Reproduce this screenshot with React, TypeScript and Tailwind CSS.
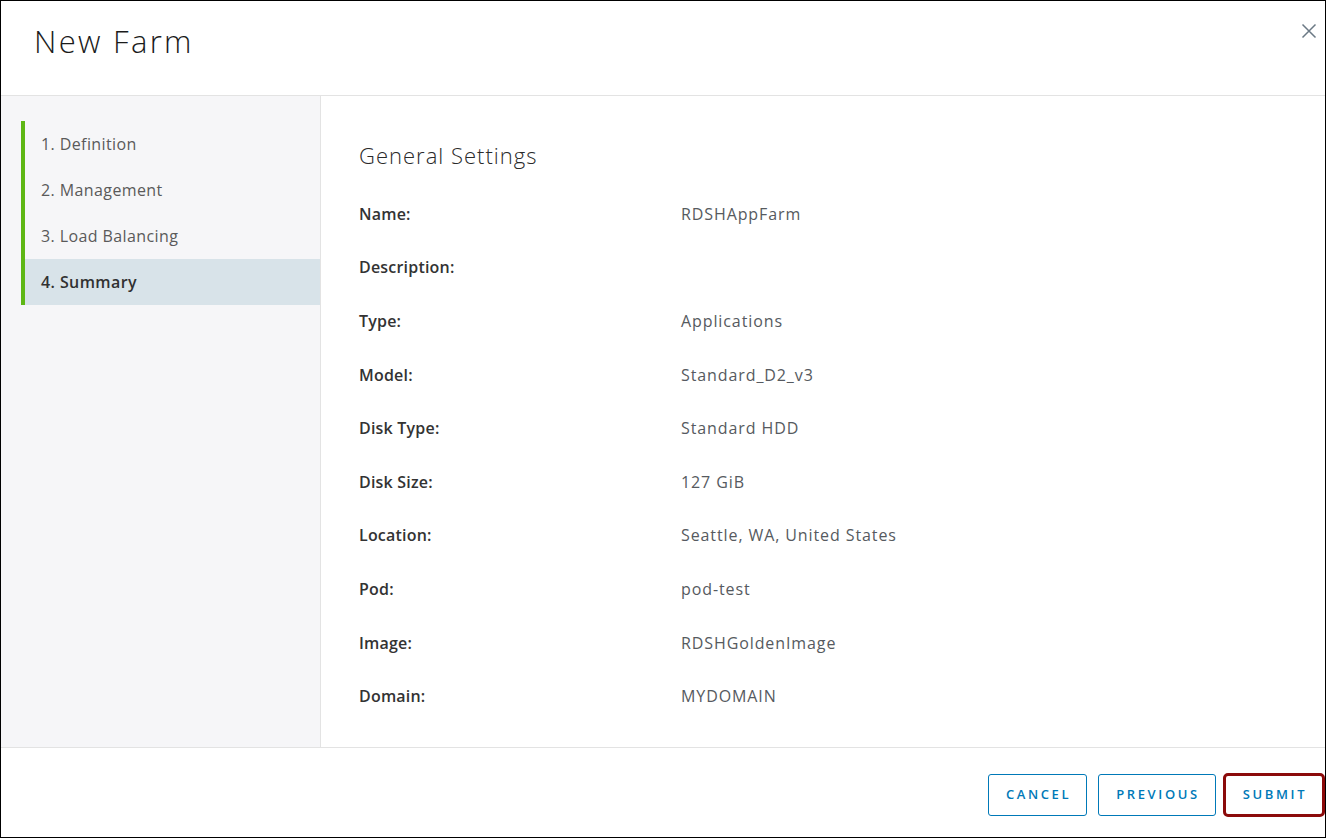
import React from "react";

const steps = ["1. Definition", "2. Management", "3. Load Balancing", "4. Summary"];

const rows: [string, string][] = [
  ["Name:", "RDSHAppFarm"],
  ["Description:", ""],
  ["Type:", "Applications"],
  ["Model:", "Standard_D2_v3"],
  ["Disk Type:", "Standard HDD"],
  ["Disk Size:", "127 GiB"],
  ["Location:", "Seattle, WA, United States"],
  ["Pod:", "pod-test"],
  ["Image:", "RDSHGoldenImage"],
  ["Domain:", "MYDOMAIN"],
];

const font = { fontFamily: '"Open Sans", "Liberation Sans", sans-serif' };

export default function App() {
  const current = 3;

  return (
    <div
      className="w-[1326px] h-[838px] bg-white border border-black flex flex-col overflow-hidden"
      style={font}
    >
      {/* 头部 */}
      <div className="h-[95px] shrink-0 flex items-start justify-between border-b border-[#e3e3e3]">
        <h1 className="pl-[33px] pt-[17px] text-[31px] font-light text-[#1b1b1b] tracking-[2.3px]">
          New Farm
        </h1>
        <button className="mt-[22px] mr-[8px] text-[#6b7985]">
          <svg width="16" height="16" viewBox="0 0 16 16" fill="none">
            <path d="M1.5 1.5 L14.5 14.5 M14.5 1.5 L1.5 14.5" stroke="currentColor" strokeWidth="1.5" />
          </svg>
        </button>
      </div>

      <div className="flex flex-1 min-h-0">
        {/* 步骤导航 */}
        <div className="w-[320px] shrink-0 bg-[#f6f6f8] border-r border-[#e3e3e3] pt-[25px] pl-[20px]">
          <div className="border-l-[4px] border-[#5eb715]">
            {steps.map((s, i) => (
              <div
                key={s}
                className={`h-[46px] flex items-center pl-[16px] text-[16px] tracking-[0.4px] ${
                  i === current
                    ? "bg-[#d8e3e9] text-[#313131] font-semibold tracking-[0.1px]"
                    : "text-[#5a5a5a]"
                }`}
              >
                {s}
              </div>
            ))}
          </div>
        </div>

        {/* 摘要 */}
        <div className="flex-1 pl-[38px] pt-[45px]">
          <h2 className="text-[22px] font-light text-[#2a2a2a] leading-[28px] tracking-[1px]">
            General Settings
          </h2>
          <div className="mt-[18px]">
            {rows.map(([label, value]) => (
              <div key={label} className="h-[53.6px] flex items-center text-[16px]">
                <div className="w-[322px] font-semibold text-[#333333] tracking-[0.2px]">{label}</div>
                <div className="text-[#565a60] tracking-[0.9px]">{value}</div>
              </div>
            ))}
          </div>
        </div>
      </div>

      {/* 底部按钮 */}
      <div className="h-[90px] shrink-0 border-t border-[#e3e3e3] flex items-center justify-end pt-[4px]">
        <button className="w-[99px] h-[42px] border border-[#0079b8] rounded-[3px] text-[#0079b8] text-[13px] font-semibold tracking-[2.6px] pl-[2px]">
          CANCEL
        </button>
        <button className="ml-[11px] w-[118px] h-[42px] border border-[#0079b8] rounded-[3px] text-[#0079b8] text-[13px] font-semibold tracking-[2.6px] pl-[2px]">
          PREVIOUS
        </button>
        <button className="ml-[7px] w-[102px] h-[44px] border-[3px] border-[#8b0a0a] rounded-[5px] text-[#0079b8] text-[13px] font-semibold tracking-[2.6px] pl-[2px]">
          SUBMIT
        </button>
      </div>
    </div>
  );
}
